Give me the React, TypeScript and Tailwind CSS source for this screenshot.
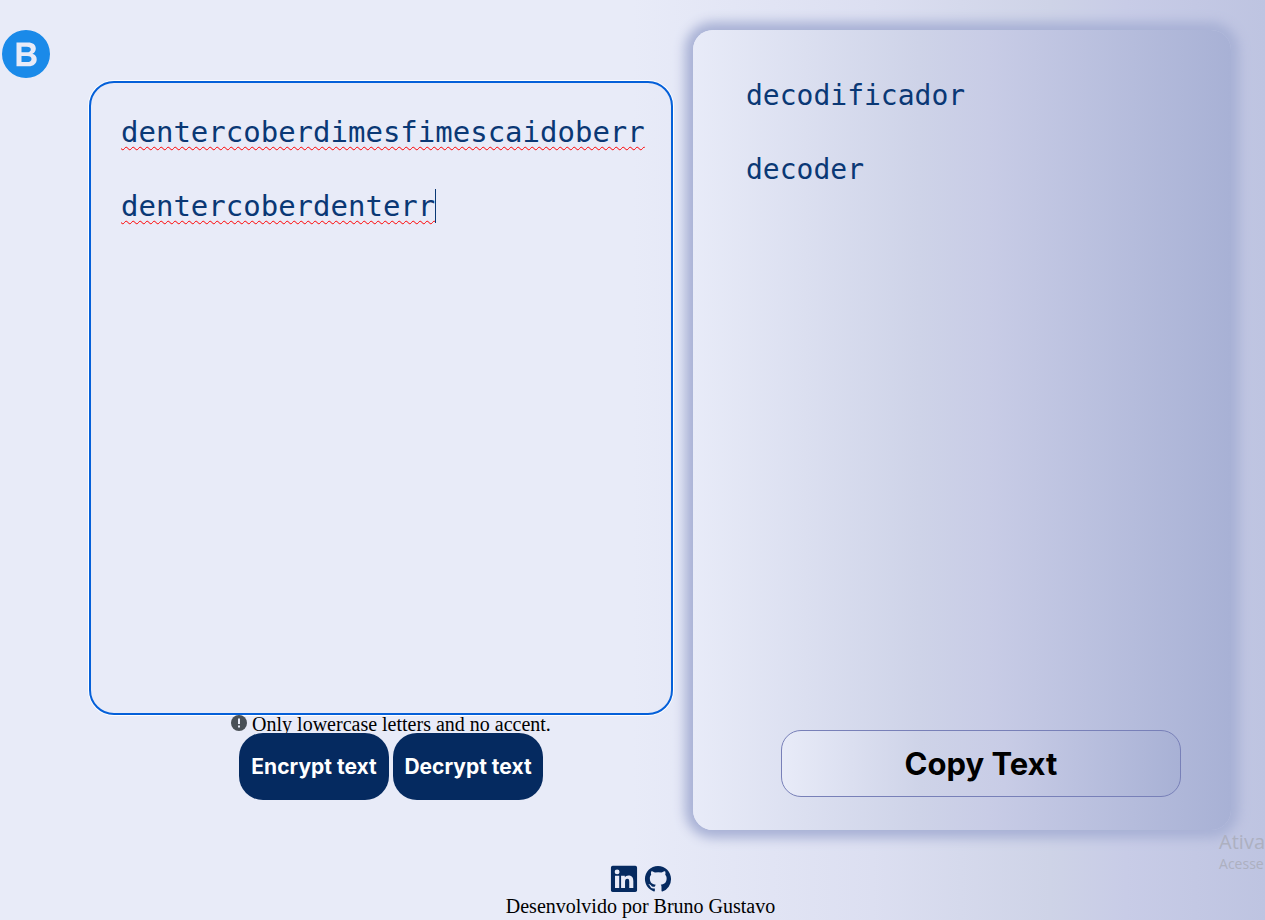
import { useState } from "react";

const INITIAL_TEXT = "dentercoberdimesfimescaidoberr\n\ndentercoberdenterr";

const CODES: [string, string][] = [
  ["enter", "e"],
  ["imes", "i"],
  ["ai", "a"],
  ["ober", "o"],
  ["ufat", "u"],
];

function decrypt(text: string) {
  return CODES.reduce((out, [code, letter]) => out.split(code).join(letter), text);
}

function encrypt(text: string) {
  return text.replace(/[aeiou]/g, (c) => CODES.find(([, letter]) => letter === c)![0]);
}

function Logo() {
  return (
    <a href="#" aria-label="Home" className="block size-12">
      <svg viewBox="0 0 48 48" className="size-12">
        <path
          fillRule="evenodd"
          fill="#1a8ae9"
          d="M24 0a24 24 0 1 0 0 48a24 24 0 0 0 0-48zM14.500 12.500H26c5 0 7.800 2.300 7.800 6.100c0 2.500-1.400 4.500-3.400 5.200c2.700.5 4.300 2.700 4.300 5.500c0 4.300-3 7-8.200 7h-12zM19.500 16.700v5.600h5.300c2.600 0 4-.9 4-2.800s-1.400-2.800-4-2.800zM19.500 26v6.100h5.600c2.900 0 4.400-1 4.400-3.100s-1.500-3-4.400-3z"
        />
      </svg>
    </a>
  );
}

function Editor({ value, onChange }: { value: string; onChange: (v: string) => void }) {
  return (
    <div className="grid flex-1 rounded-[25px] border-2 border-[#0560d9] font-['DejaVu_Sans_Mono',monospace] text-[29px] leading-[37px] shadow-[0_0_0_1px_#ffffff]">
      <div
        aria-hidden="true"
        className="col-start-1 row-start-1 overflow-hidden pt-[31px] pb-[30px] pl-[30px] break-words whitespace-pre-wrap text-transparent select-none"
      >
        <span className="underline decoration-[#ff0000] decoration-wavy decoration-1 underline-offset-[4px] [text-decoration-skip-ink:none]">
          {value}
        </span>
        <span className="border-r border-[#0a3875]" />
      </div>
      <textarea
        aria-label="Text to encrypt or decrypt"
        spellCheck={false}
        value={value}
        onChange={(e) => onChange(e.target.value)}
        className="col-start-1 row-start-1 resize-none overflow-hidden rounded-[23px] bg-transparent pt-[31px] pb-[30px] pl-[30px] text-[#0a3875] caret-transparent outline-none"
      />
    </div>
  );
}

export default function App() {
  const [text, setText] = useState(INITIAL_TEXT);
  const [result, setResult] = useState(decrypt(INITIAL_TEXT));

  return (
    <div className="relative flex min-h-screen flex-col overflow-hidden bg-[linear-gradient(90deg,#e8ebf8_50%,#dcdff1_69%,#ced3e7_83%,#c8cce7_89%,#bec4e1_100%)] font-['Liberation_Serif',serif] text-xl text-black">
      <main className="grid flex-1 grid-cols-[89px_minmax(0,584fr)_20px_minmax(0,538fr)] pt-[30px] pr-[34px]">
        <header className="pl-[2px]">
          <Logo />
        </header>

        <section className="flex flex-col pt-[51px] pb-[30px]">
          <Editor value={text} onChange={setText} />
          <p className="flex justify-center gap-[5px] pl-5 leading-[18px] whitespace-nowrap">
            <svg viewBox="0 0 16 16" className="size-4">
              <circle cx="8" cy="8" r="8" fill="#495057" />
              <path d="M7 3.500h2v5.500H7zM7 10.500h2v2H7z" fill="#e8ebf8" />
            </svg>
            Only lowercase letters and no accent.
          </p>
          <div className="flex justify-center gap-1 pl-5 font-['Inter',sans-serif] text-[21px] font-bold text-white">
            <button
              type="button"
              onClick={() => setResult(encrypt(text))}
              className="h-[67px] w-[150px] rounded-3xl bg-[#052a60]"
            >
              Encrypt text
            </button>
            <button
              type="button"
              onClick={() => setResult(decrypt(text))}
              className="h-[67px] w-[150px] rounded-3xl bg-[#052a60]"
            >
              Decrypt text
            </button>
          </div>
        </section>

        <section className="col-start-4 flex flex-col rounded-[20px] bg-[linear-gradient(90deg,#e8ebf8_0%,#ced3e8_42%,#c8cce6_55%,#a8b1d5_100%)] pt-[47px] pr-[50px] pb-[33px] pl-[53px] shadow-[0_0_12px_8px_#a8b1d5]">
          <output className="flex-1 font-['DejaVu_Sans_Mono',monospace] text-[28px] leading-[37px] whitespace-pre-wrap text-[#0a3875]">
            {result}
          </output>
          <button
            type="button"
            onClick={() => navigator.clipboard?.writeText(result)}
            className="ml-[35px] h-[67px] rounded-[20px] border border-[#7880b8] bg-[linear-gradient(90deg,#e8ebf8_0%,#ced3e8_35%,#c8cce6_56%,#a8b1d5_100%)] font-['Inter',sans-serif] text-[31px] font-bold"
          >
            Copy Text
          </button>
        </section>
      </main>

      <footer className="flex h-[90px] flex-col items-center pt-[35px] pl-4">
        <div className="flex gap-1.5 text-[#052a60]">
          <a href="https://www.linkedin.com" aria-label="LinkedIn">
            <svg viewBox="0 0 24 24" className="size-7" fill="currentColor">
              <path
                fillRule="evenodd"
                d="M21.700.7H2.300C1.500.7.8 1.400.8 2.300v19.400c0 .8.700 1.500 1.500 1.500h19.400c.8 0 1.500-.7 1.500-1.500V2.300c0-.9-.7-1.600-1.500-1.600zM7.900 19.700H4.300V9.200h3.600zM6.100 8a2.100 2.100 0 1 1 0-4.200a2.100 2.100 0 0 1 0 4.200zM20 19.700h-3.500v-5.100c0-1.200 0-2.800-1.700-2.800s-1.900 1.300-1.900 2.700v5.200H9.500V9.200h3.200v1.400c.5-.9 1.600-1.700 3.100-1.700c3.400 0 4.200 2.200 4.200 5z"
              />
            </svg>
          </a>
          <a href="https://github.com" aria-label="GitHub">
            <svg viewBox="0 0 24 24" className="size-7" fill="currentColor">
              <path d="M12 .9C5.800.9.800 5.900.8 12.100c0 4.900 3.200 9.100 7.700 10.600.6.100.8-.3.800-.6v-2c-3.100.7-3.800-1.400-3.800-1.400-.5-1.300-1.200-1.600-1.200-1.600-1-.7.100-.7.100-.7 1.100.1 1.700 1.100 1.700 1.100 1 1.700 2.600 1.200 3.300.9.100-.7.400-1.200.7-1.500-2.500-.3-5.100-1.200-5.100-5.500 0-1.200.4-2.200 1.200-3-.1-.3-.5-1.400.1-3 0 0 .9-.3 3.100 1.100a10.700 10.700 0 0 1 5.600 0c2.200-1.400 3.100-1.100 3.100-1.100.6 1.600.2 2.700.1 3 .7.800 1.200 1.800 1.200 3 0 4.300-2.600 5.200-5.100 5.500.4.300.7 1 .7 2v3.200c0 .3.200.7.800.6a11.200 11.200 0 0 0 7.400-10.600C23.200 5.900 18.200.9 12 .9z" />
            </svg>
          </a>
        </div>
        <p className="leading-[26px]">Desenvolvido por Bruno Gustavo</p>
      </footer>

      <aside className="pointer-events-none absolute right-0 bottom-[46px] font-['Open_Sans',sans-serif] whitespace-nowrap text-[#adb0c0]">
        <p className="text-xl leading-6">Ativa</p>
        <p className="text-sm leading-5">Acesse</p>
      </aside>
    </div>
  );
}
